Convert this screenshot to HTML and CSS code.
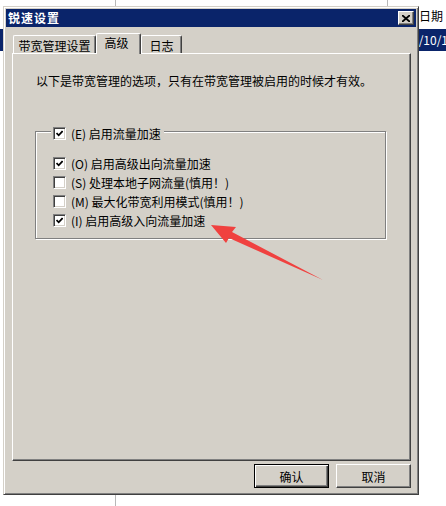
FILE: index.html
```html
<!DOCTYPE html>
<html lang="zh-CN">
<head>
    <meta charset="UTF-8">
    <title>锐速设置</title>
    <link rel="stylesheet" href="styles.css">
</head>
<body>
    <!-- list view behind the dialog -->
    <div class="listview">
        <div class="list-head">
            <div class="col col-a"></div>
            <div class="col col-b"></div>
            <div class="col col-c head-date">日期</div>
        </div>
        <div class="list-row selected">
            <div class="col col-a"></div>
            <div class="col col-b"></div>
            <div class="col col-c row-date">2020/10/12</div>
        </div>
        <div class="list-body">
            <div class="col col-a"></div>
        </div>
    </div>

    <div class="window">
        <div class="titlebar">
            <span class="title">锐速设置</span>
            <button class="close-btn">
                <svg width="8" height="7" viewBox="0 0 8 7">
                    <path d="M0 0 L8 7 M8 0 L0 7" stroke="#000" stroke-width="1.8"/>
                </svg>
            </button>
        </div>

        <div class="tabs">
            <div class="tab tab-wide">带宽管理设置</div>
            <div class="tab active">高级</div>
            <div class="tab tab-log">日志</div>
        </div>

        <div class="panel">
            <p class="intro">以下是带宽管理的选项，只有在带宽管理被启用的时候才有效。</p>

            <div class="group">
                <div class="legend">
                    <span class="box checked"></span>
                    <span>(E) 启用流量加速</span>
                </div>
                <div class="option"><span class="box checked"></span><span>(O) 启用高级出向流量加速</span></div>
                <div class="option"><span class="box"></span><span>(S) 处理本地子网流量(慎用！)</span></div>
                <div class="option"><span class="box"></span><span>(M) 最大化带宽利用模式(慎用！)</span></div>
                <div class="option"><span class="box checked"></span><span>(I) 启用高级入向流量加速</span></div>
            </div>
        </div>

        <div class="buttons">
            <button class="btn default">确认</button>
            <button class="btn">取消</button>
        </div>
    </div>

    <!-- red annotation arrow -->
    <svg class="arrow" width="446" height="506" viewBox="0 0 446 506">
        <polygon points="211,225 236,227 232,232 323,280 229,238 226,243" fill="#f0413f"/>
    </svg>
</body>
</html>
```

FILE: styles.css
```css
body {
    margin: 0;
    width: 446px;
    height: 506px;
    overflow: hidden;
    position: relative;
    background: #fff;
    font-family: "Noto Sans CJK SC", sans-serif;
    font-size: 12px;
    color: #000;
}

/* background list */
.listview {
    display: flex;
    flex-direction: column;
    height: 100%;
}

.list-head, .list-row, .list-body {
    display: flex;
}

.list-head {
    height: 29px;
}

.list-row {
    height: 22px;
}

.list-body {
    flex: 1;
}

.col {
    box-sizing: border-box;
}

.col-a {
    width: 116px;
    border-right: 1px solid #b8b8b8;
}

.col-b {
    width: 272px;
    border-right: 1px solid #b8b8b8;
}

.col-c {
    flex: 1;
    white-space: nowrap;
    overflow: hidden;
}

.head-date {
    padding: 8px 0 0 31px;
    line-height: 16px;
}

.selected {
    background: #0a246a;
    color: #fff;
}

.selected .col {
    border-right: none;
}

.row-date {
    padding-left: 4px;
    line-height: 22px;
}

/* dialog window */
.window {
    position: absolute;
    left: 3px;
    top: 6px;
    width: 416px;
    height: 489px;
    box-sizing: border-box;
    border: 1px solid;
    border-color: #d4d0c8 #404040 #404040 #d4d0c8;
    box-shadow: inset 1px 1px #fff, inset -1px -1px #808080;
    background: #d4d0c8;
    padding: 2px;
    display: flex;
    flex-direction: column;
}

.titlebar {
    height: 18px;
    background: #0a246a;
    display: flex;
    align-items: center;
    justify-content: space-between;
}

.title {
    color: #fff;
    font-weight: bold;
    letter-spacing: 1px;
    padding-left: 2px;
    line-height: 18px;
}

.close-btn {
    width: 16px;
    height: 14px;
    margin-right: 2px;
    padding: 0;
    box-sizing: border-box;
    background: #d4d0c8;
    border: 1px solid;
    border-color: #fff #404040 #404040 #fff;
    box-shadow: inset -1px -1px #808080;
    display: flex;
    align-items: center;
    justify-content: center;
}

/* tabs */
.tabs {
    display: flex;
    align-items: flex-end;
    height: 20px;
    margin-top: 6px;
    padding-left: 7px;
    position: relative;
    z-index: 1;
}

.tab {
    box-sizing: border-box;
    height: 18px;
    padding-top: 3px;
    line-height: 14px;
    text-align: center;
    border-top: 1px solid #fff;
    border-left: 1px solid #fff;
    border-right: 1px solid #404040;
    box-shadow: inset -1px 0 #808080;
    border-radius: 2px 2px 0 0;
}

.tab-wide {
    width: 83px;
}

.tab-log {
    width: 41px;
}

.tab.active {
    width: 45px;
    height: 21px;
    margin-bottom: -1px;
    padding-top: 2px;
    padding-right: 4px;
    background: #d4d0c8;
}

/* tab page */
.panel {
    flex: 1;
    margin: 0 5px 0 6px;
    border: 1px solid;
    border-color: #fff #404040 #404040 #fff;
    box-shadow: inset -1px -1px #808080;
    padding: 20px 0 0 22px;
}

.intro {
    margin: 0 0 0 1px;
    line-height: 14px;
}

.group {
    position: relative;
    width: 351px;
    height: 108px;
    box-sizing: border-box;
    margin-top: 43px;
    border: 1px solid #808080;
    box-shadow: inset 1px 1px #fff, 1px 1px #fff;
    padding: 22px 0 0 17px;
}

.legend {
    position: absolute;
    top: -8px;
    left: 15px;
    padding: 0 3px 0 2px;
    height: 19px;
    background: #d4d0c8;
    display: flex;
    align-items: center;
    gap: 5px;
}

.option {
    height: 19px;
    display: flex;
    align-items: center;
    gap: 5px;
}

.box {
    width: 13px;
    height: 13px;
    box-sizing: border-box;
    flex: none;
    background: #fff;
    border: 1px solid;
    border-color: #808080 #fff #fff #808080;
    box-shadow: inset 1px 1px #404040, inset -1px -1px #d4d0c8;
}

.box.checked {
    background: #fff url("data:image/svg+xml,%3Csvg xmlns='http://www.w3.org/2000/svg' width='7' height='7'%3E%3Cpath d='M0.5 3 L2.7 5.3 L6.6 1' fill='none' stroke='%23000' stroke-width='1.8'/%3E%3C/svg%3E") no-repeat 2px 2px;
}

/* dialog buttons */
.buttons {
    display: flex;
    justify-content: flex-end;
    gap: 7px;
    margin: 3px 5px 4px 0;
}

.btn {
    width: 75px;
    height: 24px;
    box-sizing: border-box;
    padding: 0;
    font-family: inherit;
    font-size: 12px;
    color: #000;
    background: #d4d0c8;
    border: 1px solid;
    border-color: #fff #404040 #404040 #fff;
    box-shadow: inset -1px -1px #808080;
}

.btn.default {
    border: 1px solid #000;
    box-shadow: inset 1px 1px #fff, inset -1px -1px #404040, inset -2px -2px #808080;
}

.arrow {
    position: absolute;
    left: 0;
    top: 0;
    pointer-events: none;
}
```
